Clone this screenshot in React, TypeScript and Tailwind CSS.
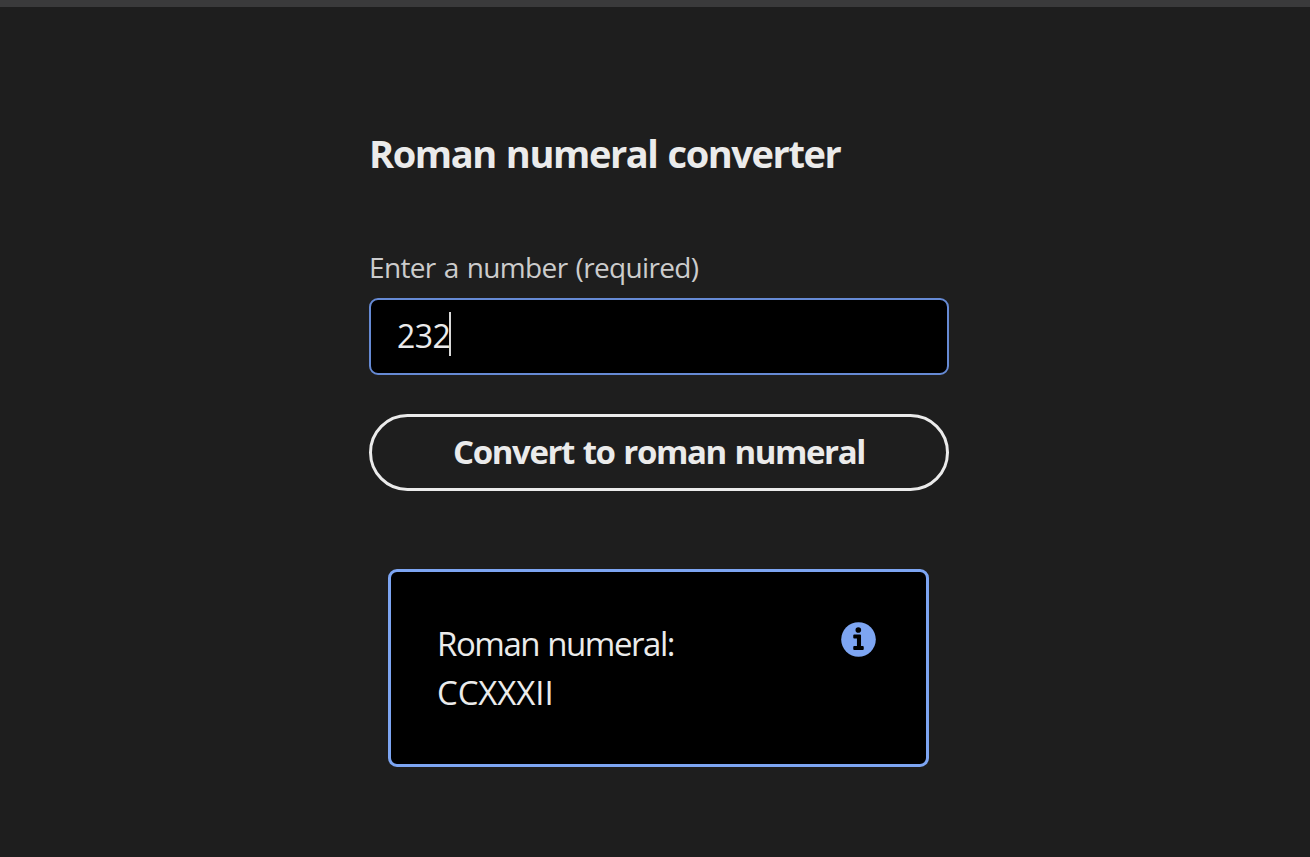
function InfoIcon() {
  return (
    <svg viewBox="0 0 36 36" className="mt-[2px] mr-[4px] size-[35px]" aria-hidden="true">
      <circle cx="18" cy="18" r="17.8" fill="#7da5f2" />
      <circle cx="17.8" cy="8.2" r="2.9" fill="#000" />
      <path
        d="M13.6 12.9h6q1 0 1 1v10.9h1.8q1 0 1 1v2q0 1-1 1h-8.8q-1 0-1-1v-2q0-1 1-1h2.8v-7.8h-2.8q-1 0-1-1v-2.1q0-1 1-1z"
        fill="#000"
      />
    </svg>
  );
}

export default function App() {
  return (
    <div className="flex h-[857px] w-full flex-col overflow-hidden bg-[#1e1e1e] font-['Open_Sans',sans-serif] text-[#ebebeb]">
      <div className="h-[7px] shrink-0 bg-[#3a3a3b]" />
      <main className="ml-[369px] flex w-[580px] flex-col pt-[122px]">
        <h1 className="text-[38px] leading-[48px] font-bold tracking-[-1.4px] whitespace-nowrap [word-spacing:1.5px]">
          Roman numeral converter
        </h1>
        <label className="mt-[70px] text-[28px] leading-[40px] tracking-[-0.65px] whitespace-nowrap text-[#cccccc] [word-spacing:1.5px]">
          Enter a number (required)
        </label>
        <div className="mt-[11px] flex h-[77px] items-center rounded-[9px] border-2 border-[#668ad4] bg-black pb-[5px] pl-[26px] text-[32px] tracking-[-0.6px]">
          <span className="pt-[3px]">232</span>
          <span className="-ml-px h-[44px] w-[2px] bg-[#d8d8d8]" />
        </div>
        <button className="mt-[39px] h-[77px] rounded-full border-[3px] border-[#ebebeb] pb-[2px] text-[33px] font-bold tracking-[-1.4px] whitespace-nowrap [word-spacing:1.5px]">
          Convert to roman numeral
        </button>
        <section className="mt-[78px] ml-[19px] flex h-[198px] w-[541px] justify-between rounded-[9px] border-[3px] border-[#7da5f2] bg-black pr-[46px] pl-[46px] pt-[48px]">
          <p className="-mt-px text-[33px] leading-[49px] whitespace-nowrap">
            <span className="tracking-[-1.45px] [word-spacing:1px]">Roman numeral:</span>
            <br />
            <span className="tracking-[-0.1px]">CCXXXII</span>
          </p>
          <InfoIcon />
        </section>
      </main>
    </div>
  );
}
